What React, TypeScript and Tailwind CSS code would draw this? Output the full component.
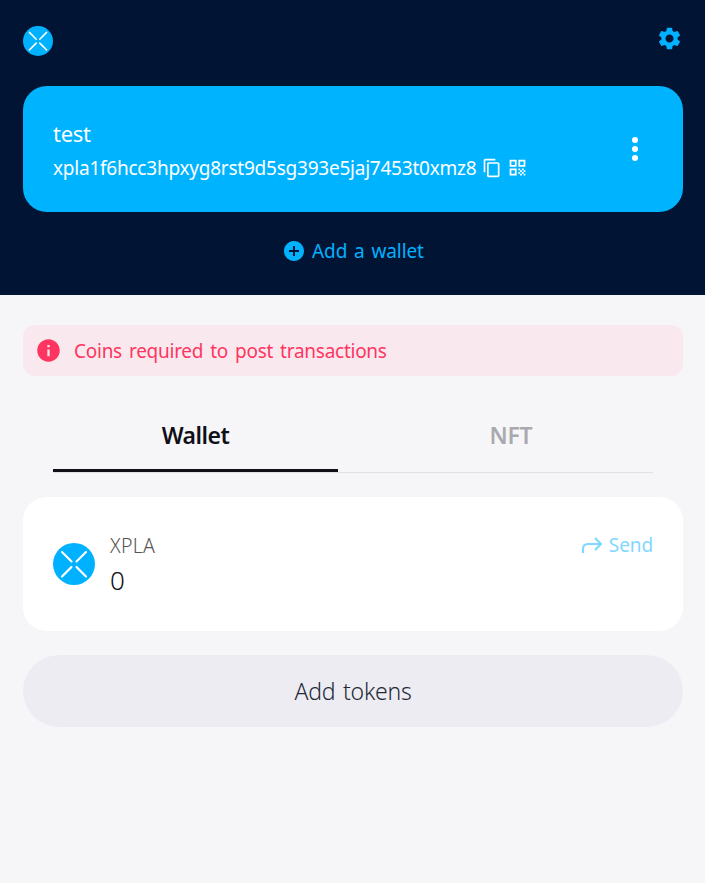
import { MdAddCircle, MdInfo, MdOutlineContentCopy, MdQrCode, MdSettings } from "react-icons/md";

function Logo({ className }: { className: string }) {
  return (
    <svg viewBox="0 0 42 42" className={className}>
      <circle cx="21" cy="21" r="21" fill="#00b1ff" />
      <path
        d="M9 9l9.500 9.500M33 9l-9.500 9.500M9 33.500l9.500-9.500M33 33.500l-9.500-9.500"
        stroke="#fff"
        strokeWidth="2.2"
        strokeLinecap="round"
      />
    </svg>
  );
}

function Header() {
  return (
    <header className="flex h-[295px] flex-col bg-[#021433] px-[23px]">
      <div className="flex h-[86px] items-start justify-between pr-[-1px]">
        <Logo className="mt-[26px] size-[30px]" />
        <MdSettings className="mt-[25px] -mr-px size-[27px] text-[#00b1ff]" />
      </div>
      <section className="flex h-[126px] w-[660px] items-center justify-between rounded-[24px] bg-[#00b3ff] pr-[45px] pl-[30px] text-white">
        <div className="flex flex-col">
          <h1 className="h-[35px] pt-[2px] text-[22px] leading-[32px] tracking-[-0.3px]">test</h1>
          <div className="flex h-[34px] items-center pt-[2px]">
            <span className="w-[428.500px] text-[19px] leading-[32px] tracking-[-0.23px]">
              xpla1f6hcc3hpxyg8rst9d5sg393e5jaj7453t0xmz8
            </span>
            <MdOutlineContentCopy className="size-5" />
            <MdQrCode className="ml-[5px] size-[21px]" />
          </div>
        </div>
        <div className="flex flex-col gap-[3px]">
          <i className="size-[6px] rounded-full bg-white" />
          <i className="size-[6px] rounded-full bg-white" />
          <i className="size-[6px] rounded-full bg-white" />
        </div>
      </section>
      <button className="ml-[259px] flex h-[78px] items-center gap-[6px] self-start text-[19px] text-[#00b1ff]">
        <MdAddCircle className="size-6" />
        <span className="tracking-[-0.1px] [word-spacing:2px]">Add a wallet</span>
      </button>
    </header>
  );
}

export default function App() {
  return (
    <div className="h-[883px] w-[705px] overflow-hidden bg-[#f6f6f9] font-['Noto_Sans','Open_Sans',sans-serif] whitespace-nowrap text-[#101116]">
      <Header />
      <main className="px-[23px] pt-[30px]">
        <div className="flex h-[51px] w-[660px] items-center rounded-xl bg-[#f9e9ee] pl-3 text-[19px] text-[#ff3561]">
          <MdInfo className="size-[27px]" />
          <span className="ml-3 pt-[2px] tracking-[-0.26px] [word-spacing:2.3px]">Coins required to post transactions</span>
        </div>
        <nav className="mx-[30px] mt-[24px] flex h-[73px] w-[600px] border-b border-[#e0e1e4] text-[23px] font-semibold">
          <button className="h-[72px] w-[285px] border-b-[3px] border-[#101116] pt-px tracking-[-0.5px]">Wallet</button>
          <button className="ml-[31px] h-[72px] w-[284px] pb-[2px] tracking-[-0.3px] text-[#a9a9ae]">NFT</button>
        </nav>
        <section className="mt-6 flex h-[134px] w-[660px] rounded-[24px] bg-white px-[30px]">
          <Logo className="mt-[46px] size-[42px]" />
          <div className="ml-[15px] pt-[33px]">
            <h2 className="h-[32px] text-[19.5px] leading-[32px] font-light tracking-[0.3px] text-[#555]">XPLA</h2>
            <p className="h-[40px] text-[26px] leading-[36px] font-light">0</p>
          </div>
          <button className="mt-[32px] ml-auto flex h-8 items-center gap-[6px] text-[19px] text-[#7fd8ff]">
            <svg viewBox="0 0 22 18" className="h-[18px] w-[22px]" fill="none" stroke="currentColor" strokeWidth="2.2">
              <path d="M2 17v-4q0-5 5-5h13M14 2l6 6-6 6" />
            </svg>
            <span className="tracking-[-0.1px]">Send</span>
          </button>
        </section>
        <button className="mt-6 h-[72px] w-[660px] rounded-full bg-[#edecf3] pt-px text-[23px] font-light tracking-[-0.25px] text-[#222936] [word-spacing:2px]">Add tokens</button>
      </main>
    </div>
  );
}
